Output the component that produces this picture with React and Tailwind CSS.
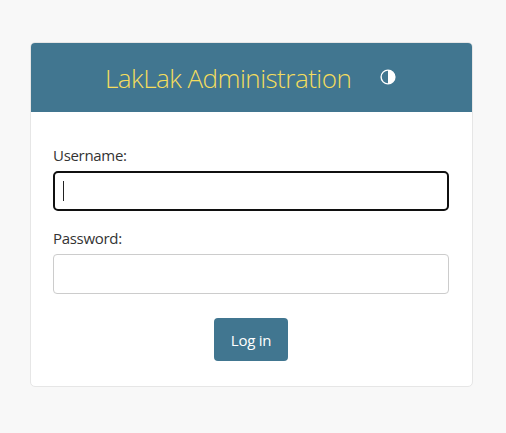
function ContrastIcon() {
  return (
    <svg viewBox="0 0 16 16" className="size-4" fill="currentColor" aria-hidden="true">
      <path d="M8 15.6A7.6 7.6 0 1 0 8 .4a7.6 7.6 0 0 0 0 15.2zM8 1.8a6.2 6.2 0 0 0 0 12.4V1.8z" fillRule="evenodd" />
    </svg>
  );
}

export default function App() {
  return (
    <div className="flex h-[433px] w-[506px] items-start bg-[#f8f8f8] pt-[42px] pl-[30px] font-['Open_Sans','Noto_Sans',sans-serif] text-[#333]">
      <main className="h-[345px] w-[443px] overflow-hidden rounded-[5px] border border-[#e6e6e6] bg-white">
        <header className="flex h-[69px] items-center bg-[#417690] pl-[74px]">
          <h1 className="flex w-[247px] whitespace-nowrap text-[26px] leading-[32px] font-light tracking-[-0.52px] text-[#f5dd5d]">
            LakLak Administration
          </h1>
          <button type="button" aria-label="Toggle theme" className="mb-[1px] ml-[28px] flex text-white">
            <ContrastIcon />
          </button>
        </header>
        <form className="flex flex-col pt-[31px] pr-[23px] pl-[22px]">
          <label className="text-[15px] leading-[24px] tracking-[-0.3px]">Username:</label>
          <div className="mt-[4px] flex h-[40px] items-center rounded-[5px] border-2 border-[#101010] pl-2">
            <span className="h-5 w-px bg-[#222]" />
          </div>
          <label className="mt-[15px] text-[15px] leading-[24px] tracking-[-0.3px]">Password:</label>
          <div className="mt-[4px] h-[40px] rounded-[4px] border border-[#ccc]" />
          <button type="button" className="mt-[24px] ml-[161px] h-[43px] w-[74px] rounded-[4px] bg-[#417690] pt-[2px] text-[15px] tracking-[-0.25px] text-white">
            Log in
          </button>
        </form>
      </main>
    </div>
  );
}
